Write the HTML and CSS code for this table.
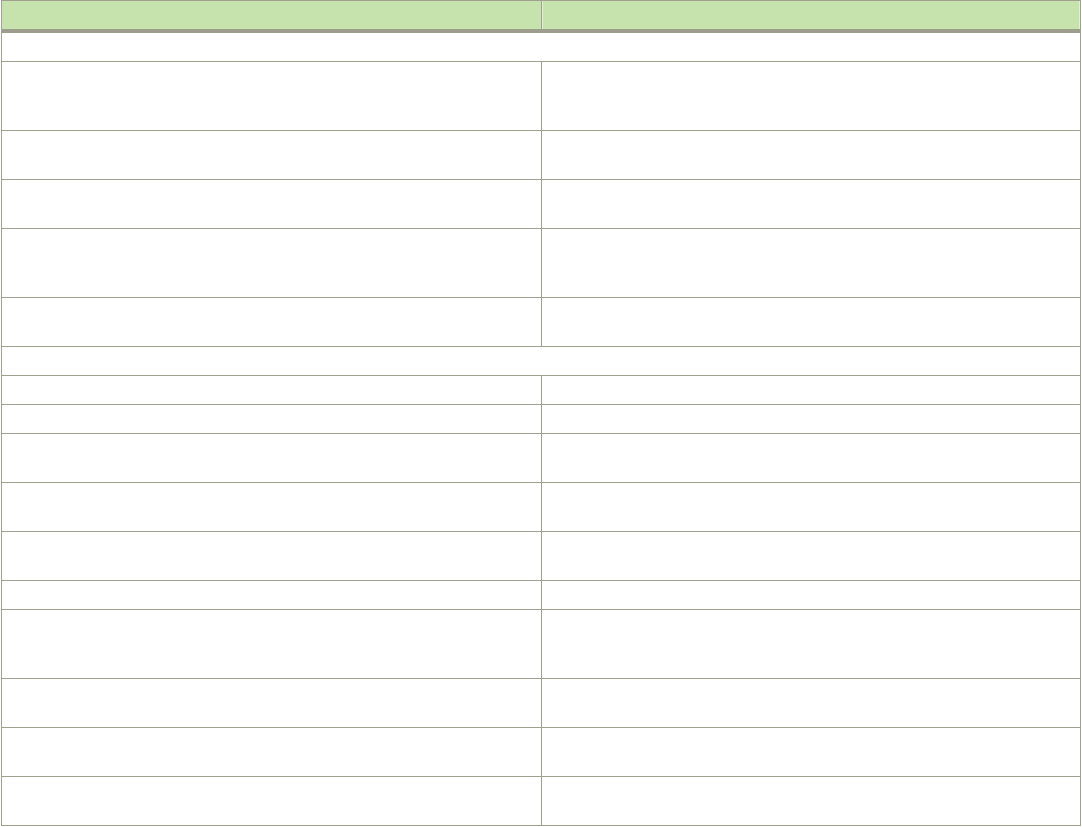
FILE: index.html
```html
<!DOCTYPE html>
<html lang="en">
<head>
    <meta charset="UTF-8">
    <meta name="viewport" content="width=device-width, initial-scale=1.0">
    <title>Table</title>
    <link rel="stylesheet" href="styles.css">
</head>
<body>
    <table class="spec-table">
        <thead>
            <tr>
                <th></th>
                <th></th>
            </tr>
        </thead>
        <tbody>
            <tr class="row-1"><td colspan="2"></td></tr>
            <tr class="row-3"><td></td><td></td></tr>
            <tr class="row-2"><td></td><td></td></tr>
            <tr class="row-2"><td></td><td></td></tr>
            <tr class="row-3"><td></td><td></td></tr>
            <tr class="row-2"><td></td><td></td></tr>
            <tr class="row-1"><td colspan="2"></td></tr>
            <tr class="row-1"><td></td><td></td></tr>
            <tr class="row-1"><td></td><td></td></tr>
            <tr class="row-2"><td></td><td></td></tr>
            <tr class="row-2"><td></td><td></td></tr>
            <tr class="row-2"><td></td><td></td></tr>
            <tr class="row-1"><td></td><td></td></tr>
            <tr class="row-3"><td></td><td></td></tr>
            <tr class="row-2"><td></td><td></td></tr>
            <tr class="row-2"><td></td><td></td></tr>
            <tr class="row-2"><td></td><td></td></tr>
        </tbody>
    </table>
</body>
</html>
```

FILE: styles.css
```css
body {
    font-family: "Liberation Sans", Arial, sans-serif;
    font-size: 13px;
    margin: 0;
    padding: 0;
    background-color: #fff;
}
.spec-table {
    margin-left: 1px;
    width: 1080px;
    table-layout: fixed;
    border-collapse: separate;
    border-spacing: 0;
    border-top: 1px solid #a0a091;
    border-left: 1px solid #a0a091;
}
.spec-table th,
.spec-table td {
    box-sizing: border-box;
    padding: 0;
    border-right: 1px solid #a0a091;
    border-bottom: 1px solid #a0a091;
}
.spec-table th {
    width: 540px;
    height: 32px;
    background-color: #c7e3ad;
    border-bottom: 4px solid #9d9d8d;
}
.spec-table th + th {
    width: auto;
    box-shadow: inset 1px 0 #e2efd5, inset -1px 0 #e2efd5;
}
.row-1 td {
    height: 29px;
}
.row-2 td {
    height: 49px;
}
.row-3 td {
    height: 69px;
}
```
